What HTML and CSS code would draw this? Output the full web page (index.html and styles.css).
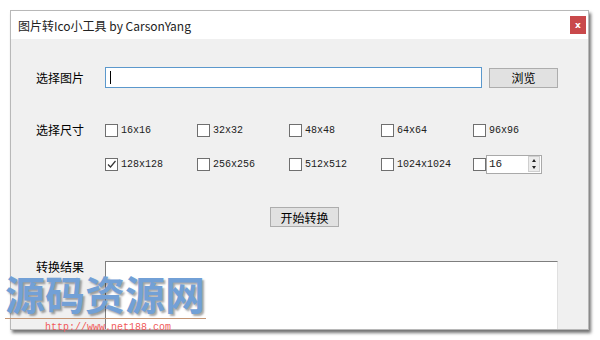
FILE: index.html
```html
<!DOCTYPE html>
<html lang="zh-CN">
<head>
    <meta charset="UTF-8">
    <title>图片转Ico小工具</title>
    <link rel="stylesheet" href="styles.css">
</head>
<body>
    <div class="window">
        <div class="titlebar">
            <span class="title">图片转Ico小工具 by CarsonYang</span>
            <button class="close-btn">x</button>
        </div>

        <div class="content">
            <div class="row">
                <span class="label">选择图片</span>
                <div class="path-input"><span class="caret"></span></div>
                <button class="btn">浏览</button>
            </div>

            <div class="row size-row">
                <span class="label">选择尺寸</span>
                <div class="size-grid">
                    <label class="size"><input type="checkbox"><span>16x16</span></label>
                    <label class="size"><input type="checkbox"><span>32x32</span></label>
                    <label class="size"><input type="checkbox"><span>48x48</span></label>
                    <label class="size"><input type="checkbox"><span>64x64</span></label>
                    <label class="size"><input type="checkbox"><span>96x96</span></label>
                    <label class="size"><input type="checkbox" checked><span>128x128</span></label>
                    <label class="size"><input type="checkbox"><span>256x256</span></label>
                    <label class="size"><input type="checkbox"><span>512x512</span></label>
                    <label class="size"><input type="checkbox"><span>1024x1024</span></label>
                    <label class="size custom">
                        <input type="checkbox">
                        <span class="spinner">
                            <span class="spin-value">16</span>
                            <span class="spin-btns">
                                <span class="spin-up"></span>
                                <span class="spin-down"></span>
                            </span>
                        </span>
                    </label>
                </div>
            </div>

            <div class="action">
                <button class="btn">开始转换</button>
            </div>

            <div class="row result-row">
                <span class="label">转换结果</span>
                <div class="result-box"></div>
            </div>
        </div>
    </div>

    <div class="watermark">
        <div class="wm-text">源码资源网</div>
        <div class="wm-line"></div>
        <div class="wm-url">http://www.net188.com</div>
    </div>
</body>
</html>
```

FILE: styles.css
```css
* {
    box-sizing: border-box;
    margin: 0;
    padding: 0;
}

body {
    width: 600px;
    height: 340px;
    padding: 10px 0 0 10px;
    background: #ffffff;
    font-family: "Noto Sans CJK SC", sans-serif;
    font-size: 12px;
    color: #000;
    position: relative;
    overflow: hidden;
}

.window {
    width: 579px;
    height: 320px;
    border: 1px solid #b8b8b8;
    background: #f0f0f0;
    box-shadow: 2px 3px 3px rgba(0, 0, 0, 0.55);
    overflow: hidden;
}

/* title bar */
.titlebar {
    height: 28px;
    background: #ffffff;
    display: flex;
    align-items: center;
    justify-content: space-between;
    padding: 0 2px 0 7px;
}

.title {
    font-size: 12px;
    color: #222;
}

.close-btn {
    width: 16px;
    height: 18px;
    border: none;
    background: #c9494b;
    color: #fff;
    font-family: "DejaVu Sans", sans-serif;
    font-size: 9px;
    font-weight: bold;
    line-height: 18px;
}

/* form */
.content {
    padding: 28px 0 0 25px;
}

.row {
    display: flex;
    align-items: center;
}

.label {
    width: 69px;
    flex-shrink: 0;
    font-size: 12px;
}

.path-input {
    width: 377px;
    height: 21px;
    border: 1px solid #5b98cc;
    background: #fff;
    padding: 3px 4px;
}

.caret {
    display: block;
    width: 1px;
    height: 13px;
    background: #000;
}

.btn {
    height: 20px;
    width: 69px;
    border: 1px solid #adadad;
    background: #e1e1e1;
    font-family: "Noto Sans CJK SC", sans-serif;
    font-size: 12px;
    color: #000;
}

.path-input + .btn {
    margin-left: 7px;
}

/* sizes */
.size-row {
    margin-top: 32px;
    align-items: flex-start;
}

.size-row .label {
    line-height: 20px;
}

.size-grid {
    display: grid;
    grid-template-columns: repeat(5, 92px);
    row-gap: 14px;
}

.size {
    display: flex;
    align-items: center;
    height: 20px;
    font-family: "Liberation Mono", monospace;
    font-size: 10px;
    color: #222;
}

.size input {
    appearance: none;
    width: 13px;
    height: 13px;
    border: 1px solid #6f6f6f;
    background: #fff;
    margin-right: 3px;
}

.size input:checked {
    background: #fff url("data:image/svg+xml;utf8,<svg xmlns='http://www.w3.org/2000/svg' width='11' height='11'><path d='M2 5.5 L4.5 8 L9.5 2' fill='none' stroke='%23333' stroke-width='1.2'/></svg>") no-repeat center;
}

.custom input {
    margin-right: 0;
}

.spinner {
    display: flex;
    align-items: center;
    justify-content: space-between;
    width: 56px;
    height: 19px;
    border: 1px solid #a9a9a9;
    background: #fff;
    padding: 0 1px 0 2px;
}

.spin-value {
    font-size: 11px;
}

.spin-btns {
    display: flex;
    flex-direction: column;
    width: 12px;
    height: 16px;
    border: 1px solid #cfcfcf;
    background: #ececec;
}

.spin-up,
.spin-down {
    flex: 1;
    position: relative;
}

.spin-up::after,
.spin-down::after {
    content: '';
    position: absolute;
    left: 3px;
    border-left: 2.5px solid transparent;
    border-right: 2.5px solid transparent;
}

.spin-up::after {
    top: 2px;
    border-bottom: 3px solid #222;
}

.spin-down::after {
    top: 2px;
    border-top: 3px solid #222;
}

.action {
    margin-top: 33px;
    padding-left: 234px;
    display: flex;
}

/* result */
.result-row {
    margin-top: 34px;
    align-items: flex-start;
}

.result-row .label {
    font-family: "Liberation Sans", "Noto Sans CJK SC", sans-serif;
    line-height: 12px;
    padding-top: 1px;
}

.result-box {
    width: 453px;
    height: 80px;
    background: #fff;
    border-top: 1px solid #7e7e7e;
    border-left: 1px solid #7e7e7e;
    border-right: 1px solid #e0e0e0;
}

/* watermark over the bottom left corner */
.watermark {
    position: absolute;
    left: 5px;
    top: 279px;
    width: 201px;
}

.wm-text {
    font-family: "Liberation Sans", "Noto Sans CJK SC", sans-serif;
    font-weight: bold;
    font-size: 40px;
    line-height: 34px;
    color: #72a0d6;
    text-shadow: 2px 2px 2px rgba(0, 0, 0, 0.35);
    white-space: nowrap;
}

.wm-line {
    height: 1px;
    margin-top: 5px;
    background: #c39574;
}

.wm-url {
    margin: 3px 0 0 40px;
    font-family: "Liberation Mono", monospace;
    font-size: 10px;
    line-height: 11px;
    color: #f05a5a;
}
```
